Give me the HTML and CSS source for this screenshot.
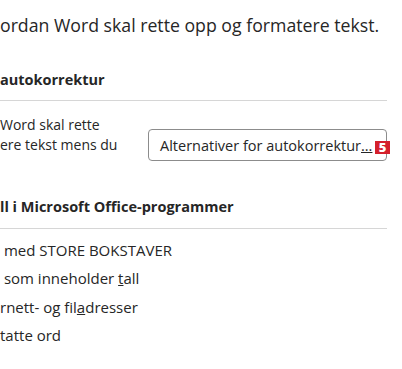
FILE: index.html
```html
<!DOCTYPE html>
<html lang="no">
<head>
    <meta charset="UTF-8">
    <meta name="viewport" content="width=device-width, initial-scale=1.0">
    <title>Korrektur</title>
    <link rel="stylesheet" href="styles.css">
</head>
<body>
    <div class="page">
        <p class="intro">ordan Word skal rette opp og formatere tekst.</p>

        <h2 class="section-title">autokorrektur</h2>
        <div class="option-row">
            <p class="option-text">Word skal rette<br>ere tekst mens du</p>
            <div class="btn-wrap">
                <button class="btn" type="button">Alternativer for autokorrektur<u>...</u></button>
                <span class="badge">5</span>
            </div>
        </div>

        <h2 class="section-title second">ll i Microsoft Office-programmer</h2>
        <ul class="checks">
            <li> med STORE BOKSTAVER</li>
            <li> som inneholder <u>t</u>all</li>
            <li>rnett- og fil<u>a</u>dresser</li>
            <li>tatte ord</li>
        </ul>
    </div>
</body>
</html>
```

FILE: styles.css
```css
body {
    margin: 0;
    background: #ffffff;
    color: #262626;
    font-family: "Open Sans", "Noto Sans", sans-serif;
    overflow: hidden;
}

.page {
    width: 387px;
    padding-top: 13px;
}

.intro {
    margin: 0;
    font-size: 17.7px;
    line-height: 24px;
}

.section-title {
    margin: 0;
    font-size: 14.5px;
    font-weight: 700;
    line-height: 18px;
    padding-top: 34px;
    padding-bottom: 11px;
    border-bottom: 1px solid #d6d6d6;
}

.section-title.second {
    padding-top: 37px;
    padding-bottom: 12px;
}

.option-row {
    display: flex;
    align-items: flex-start;
    justify-content: space-between;
    padding-top: 14px;
}

.option-text {
    margin: 0;
    font-size: 14px;
    line-height: 20px;
}

.btn-wrap {
    position: relative;
    margin-top: 14px;
}

.btn {
    display: block;
    width: 239px;
    height: 32px;
    padding: 0 0 0 11px;
    text-align: left;
    background: #ffffff;
    border: 1px solid #8c8c8c;
    border-radius: 4px;
    color: #262626;
    font-family: inherit;
    font-size: 14.5px;
}

.badge {
    position: absolute;
    right: -3px;
    top: 12px;
    width: 15px;
    height: 13px;
    background: #d4202c;
    color: #ffffff;
    font-size: 13px;
    font-weight: 800;
    line-height: 13px;
    text-align: center;
}

.checks {
    list-style: none;
    margin: 0;
    padding: 7px 0 0 0;
}

.checks li {
    font-size: 15px;
    line-height: 28.3px;
    white-space: pre;
}
```
